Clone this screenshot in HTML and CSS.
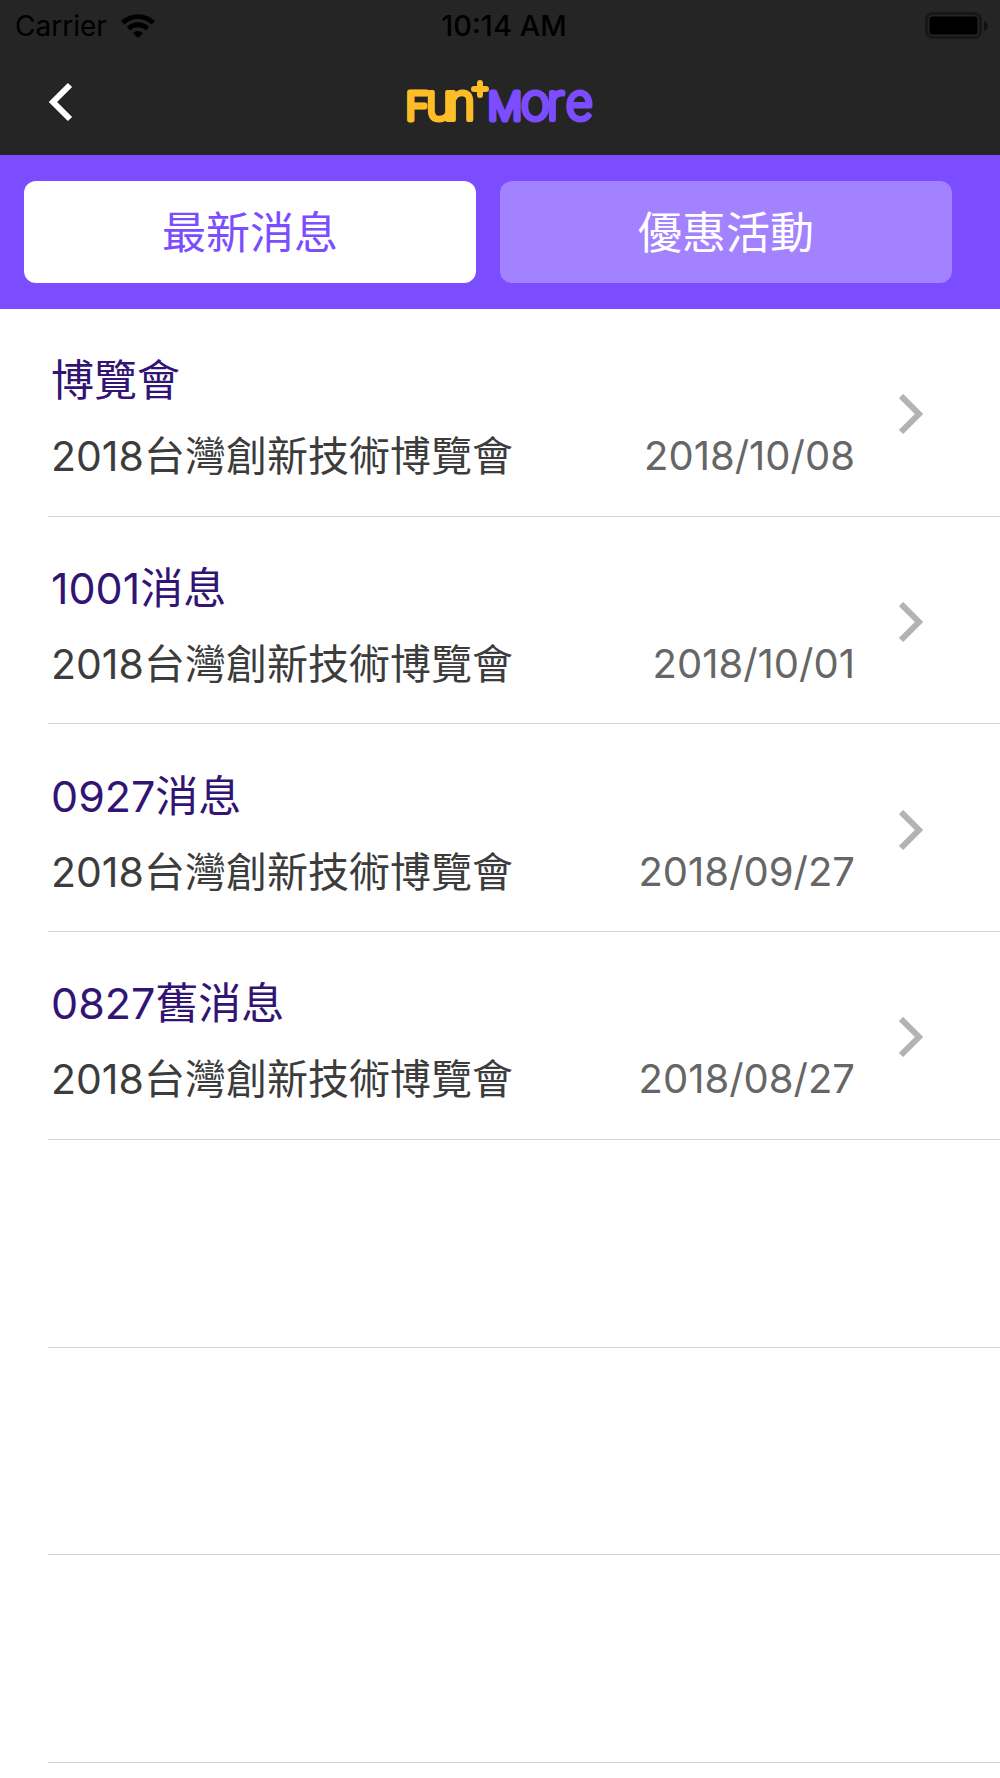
FILE: index.html
```html
<!DOCTYPE html>
<html lang="zh-Hant">
<head>
<meta charset="utf-8">
<meta name="viewport" content="width=device-width, initial-scale=1">
<title>Fun+More 最新消息</title>
<link rel="stylesheet" href="styles.css">
</head>
<body>
<header class="header">
  <div class="status">
    <div class="carrier">Carrier
      <svg class="wifi" viewBox="0 0 34 24" aria-hidden="true"><path d="M17 24l-5-5a7.4 7.4 0 0 1 10 0zM9.300 16.400l-3.500-3.500a16 16 0 0 1 22.400 0l-3.500 3.500a11 11 0 0 0-15.400 0zM3.400 10.500L0 7a24.500 24.500 0 0 1 34 0l-3.400 3.500a19.500 19.500 0 0 0-27.200 0z"/></svg>
    </div>
    <time class="clock">10:14 AM</time>
    <svg class="battery" viewBox="0 0 64 28" aria-label="電池"><rect class="shell" x="1.500" y="1.500" width="54" height="24" rx="6"/><rect x="4.500" y="4.500" width="48" height="18" rx="3"/><path class="cap" d="M59 9c5 1 5 9 0 10z"/></svg>
  </div>
  <nav class="nav">
    <button class="back" type="button" aria-label="返回"><svg viewBox="0 0 25 40"><path d="M22 3L5 20l17 17"/></svg></button>
    <svg class="logo" viewBox="0 0 188 44" role="img" aria-label="Fun+More">
      <text class="fun" y="40"><tspan class="upper" x="0">F</tspan><tspan class="lower" x="20 41">un</tspan></text>
      <path class="spark" d="M74 3v12M68 9h12"/>
      <text class="more" y="40"><tspan class="upper" x="82">M</tspan><tspan class="lower" x="115 141 160">ore</tspan></text>
    </svg>
  </nav>
</header>
<div class="tabs" role="tablist">
  <button class="tab active" type="button" role="tab" aria-selected="true">最新消息</button>
  <button class="tab" type="button" role="tab" aria-selected="false">優惠活動</button>
</div>
<main class="list">
  <a class="row" href="#expo">
    <div class="body"><h2>博覽會</h2><div class="meta"><span>2018台灣創新技術博覽會</span><time>2018/10/08</time></div></div>
    <svg class="chevron" viewBox="0 0 24 40"><path d="M2 2l18 18L2 38"/></svg>
  </a>
  <a class="row" href="#news-1001">
    <div class="body"><h2>1001消息</h2><div class="meta"><span>2018台灣創新技術博覽會</span><time>2018/10/01</time></div></div>
    <svg class="chevron" viewBox="0 0 24 40"><path d="M2 2l18 18L2 38"/></svg>
  </a>
  <a class="row" href="#news-0927">
    <div class="body"><h2>0927消息</h2><div class="meta"><span>2018台灣創新技術博覽會</span><time>2018/09/27</time></div></div>
    <svg class="chevron" viewBox="0 0 24 40"><path d="M2 2l18 18L2 38"/></svg>
  </a>
  <a class="row" href="#news-0827">
    <div class="body"><h2>0827舊消息</h2><div class="meta"><span>2018台灣創新技術博覽會</span><time>2018/08/27</time></div></div>
    <svg class="chevron" viewBox="0 0 24 40"><path d="M2 2l18 18L2 38"/></svg>
  </a>
  <div class="row"></div>
  <div class="row"></div>
  <div class="row"></div>
</main>
</body>
</html>
```
FILE: styles.css
```css
* { box-sizing: border-box; }

body {
  margin: 0;
  min-height: 100vh;
  display: flex;
  flex-direction: column;
  background: #fff;
  font-family: Inter, "Noto Sans CJK TC", sans-serif;
}

svg { display: block; flex: none; }

.header { background: #252525; }

.status {
  display: grid;
  grid-template-columns: 1fr auto 1fr;
  align-items: center;
  height: 50px;
  padding: 2px 11px 0 15px;
  font-size: 28px;
  line-height: 34px;
  color: #000;
}
.carrier { display: flex; align-items: center; gap: 14px; }
.wifi { width: 34px; height: 24px; }
.clock { padding-left: 4px; font-size: 29px; font-weight: 500; }
.battery { width: 64px; height: 28px; justify-self: end; }
.shell { fill: none; stroke: #171717; stroke-width: 3; }
.cap { fill: #111; }

.nav {
  display: grid;
  grid-template-columns: 1fr auto 1fr;
  align-items: center;
  height: 105px;
  padding: 0 48px 2px;
}
.back {
  justify-self: start;
  padding: 0;
  border: 0;
  background: none;
}
.back svg { width: 25px; height: 40px; }
.back path { fill: none; stroke: #fff; stroke-width: 6; }
.logo { width: 188px; height: 44px; overflow: visible; }
.logo text {
  font-family: Roboto, sans-serif;
  font-weight: 300;
  stroke-width: 4;
  stroke-linejoin: round;
}
.logo .upper { font-size: 39px; stroke-width: 5; }
.lower { font-size: 51px; }
.fun, .spark { fill: #fdbd27; stroke: #fdbd27; }
.spark { stroke-width: 6; stroke-linecap: round; }
.more { fill: #7c4dff; stroke: #7c4dff; }

.tabs {
  display: grid;
  grid-template-columns: 1fr 1fr;
  gap: 24px;
  padding: 26px 48px 26px 24px;
  background: #7c4dff;
}
.tab {
  height: 102px;
  padding: 0 0 4px;
  border: 0;
  border-radius: 12px;
  background: #a382ff;
  color: #fff;
  font: inherit;
  font-size: 44px;
}
.tab.active { background: #fff; color: #7c4dff; }
.tab, h2 {
  font-family: Inter, "Noto Sans CJK SC", sans-serif;
  -webkit-locale: "zh-Hans";
}

.list {
  flex: 1;
  display: grid;
  grid-auto-rows: minmax(180px, 1fr);
  padding: 0 0 15px 48px;
}
.row {
  display: flex;
  align-items: center;
  gap: 44px;
  padding: 4px 77px 0 3px;
  border-bottom: 1px solid #d2d1d6;
  color: inherit;
  text-decoration: none;
}
.body { flex: 1; padding-top: 8px; }
h2 {
  margin: 0 0 16px;
  font-size: 43px;
  line-height: 60px;
  font-weight: 400;
  color: #311473;
}
.meta {
  display: flex;
  justify-content: space-between;
  font-size: 41px;
  line-height: 60px;
  color: #3c3c3c;
}
.meta time { font-size: 40px; color: #666; }
.chevron { width: 24px; height: 40px; }
.chevron path { fill: none; stroke: #b3b3b3; stroke-width: 6; }
```
